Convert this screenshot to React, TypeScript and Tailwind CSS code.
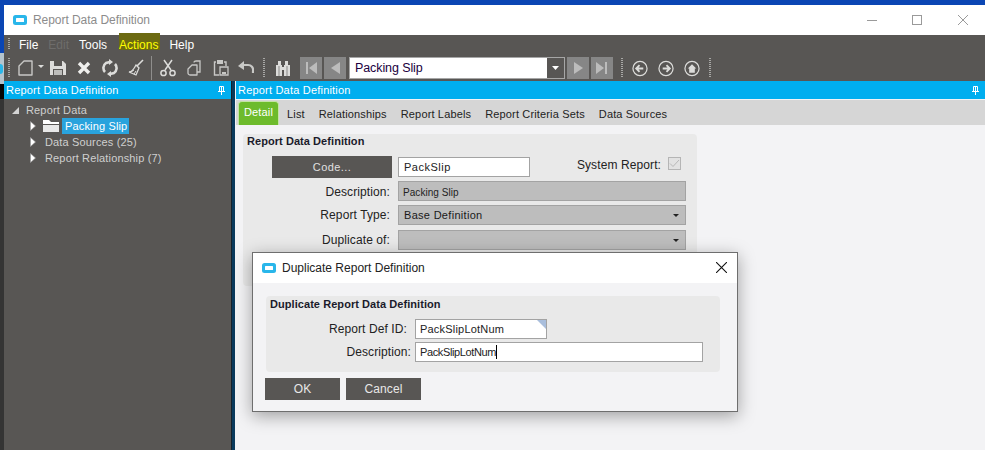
const font = "font-['Liberation_Sans',Arial,sans-serif]";

function AppIcon() {
  return (
    <svg width="14" height="10" viewBox="0 0 14 10" className="shrink-0">
      <rect x="0" y="0" width="14" height="10" rx="2.5" fill="#29b6ea" />
      <rect x="3" y="3" width="8" height="4" rx="0.5" fill="#fff" />
    </svg>
  );
}

function Grip() {
  return (
    <div className="w-[2px] h-[20px] shrink-0 bg-[repeating-linear-gradient(to_bottom,#a8a8a6_0,#a8a8a6_1px,transparent_1px,transparent_2px)]" />
  );
}

function Ico({ x, w = 16, children }: { x: string; w?: number; children: React.ReactNode }) {
  return (
    <svg width={w} height="18" viewBox={`0 0 ${w} 18`} className={`shrink-0 ${x}`} fill="none">
      {children}
    </svg>
  );
}

const C = "#dcdcda";
const D = "#c8c8c6";

function CloseGlyph({ color, size = 10 }: { color: string; size?: number }) {
  return (
    <svg width={size} height={size} viewBox="0 0 10 10" className="shrink-0">
      <path d="M0 0L10 10M10 0L0 10" stroke={color} strokeWidth="1" />
    </svg>
  );
}

function PinGlyph() {
  return (
    <svg width="7" height="9" viewBox="0 0 7 9" className="shrink-0">
      <path d="M1.5 0.5h4v5h-4z" stroke="#fff" fill="none" />
      <path d="M3 1h1v4H3z" fill="#fff" />
      <path d="M0 5h7v1H0zM3 6h1v3H3z" fill="#fff" />
    </svg>
  );
}

function Toolbar() {
  return (
    <div className="h-[28px] flex items-center pl-[4px] pt-[2px]">
      <Grip />
      <Ico x="ml-[8px]" w={15}>
        <path d="M6 2h8v14H1V7z" stroke={D} strokeWidth="1.4" strokeLinejoin="round" />
      </Ico>
      <svg width="6" height="3" viewBox="0 0 6 3" className="ml-[5px] mb-[4px] shrink-0">
        <path d="M0 0h6L3 3z" fill={C} />
      </svg>
      <Ico x="ml-[6px]">
        <path d="M0 2h13l3 3v11H0z" fill={C} />
        <rect x="4" y="2" width="8" height="5" fill="#585654" />
        <rect x="3" y="10" width="10" height="6" fill="#585654" />
        <rect x="4" y="11" width="8" height="5" fill="#bdbdbb" />
      </Ico>
      <Ico x="ml-[11px]" w={14}>
        <path d="M2 4l10 10M12 4L2 14" stroke="#efefed" strokeWidth="3.4" />
      </Ico>
      <Ico x="ml-[11px]">
        <path d="M3 13a6 6 0 0 1 1-9l4-1" stroke={C} strokeWidth="2.6" />
        <path d="M13 5a6 6 0 0 1-1 9l-4 1" stroke={C} strokeWidth="2.6" />
        <path d="M7 0l4 3-4 3zM9 12l-4 3 4 3z" fill={C} />
      </Ico>
      <Ico x="ml-[10px]">
        <path d="M15 1L9 7" stroke={C} strokeWidth="1.6" />
        <path d="M8 6l3 3-3 7-7-3c3 0 5-3 7-7z" stroke={C} strokeWidth="1.3" />
        <path d="M3 13l3-2M6 15l2-3" stroke={C} />
      </Ico>
      <div className="ml-[7px] w-px h-[24px] bg-[#8f8e8c] shrink-0" />
      <Ico x="ml-[8px]">
        <path d="M4 1l7 10M12 1L5 11" stroke={C} strokeWidth="1.5" />
        <circle cx="3.5" cy="14" r="2.6" stroke={C} strokeWidth="1.5" />
        <circle cx="12.5" cy="14" r="2.6" stroke={C} strokeWidth="1.5" />
      </Ico>
      <Ico x="ml-[11px]" w={14}>
        <path d="M7 3.5C7 2.500 8 2 9 2h4v11h-3" stroke={D} strokeWidth="1.3" />
        <path d="M5 6h5v10H3a2 2 0 0 1-2-2v-4z" stroke={D} strokeWidth="1.3" strokeLinejoin="round" />
      </Ico>
      <Ico x="ml-[12px]">
        <path d="M3 3H1.500v13H6M11 3h2v4" stroke={D} strokeWidth="1.4" />
        <rect x="4" y="1" width="6" height="4" fill={D} />
        <path d="M7 8h8v8H7z" stroke={D} strokeWidth="1.3" />
        <path d="M9 13h4v2H9z" fill={D} />
      </Ico>
      <Ico x="ml-[9px]">
        <path d="M4 6h6a5 5 0 0 1 5 6v2" stroke={D} strokeWidth="2.2" />
        <path d="M0 7l6-5v9z" fill={D} />
      </Ico>
      <div className="ml-[9px]">
        <Grip />
      </div>
      <Ico x="ml-[10px]">
        <path d="M3 2h3v4H3zM10 2h3v4h-3zM1 6h6v11H1zM9 6h6v11H9zM7 8h2v3H7z" fill={C} />
        <path d="M4 7v10M12 7v10" stroke="#8a8988" />
      </Ico>
      <div className="ml-[9px] flex gap-[2px]">
        <NavBtn><path d="M6 5h2v12H6zM17 5v12l-8-6z" fill="#bcbcbc" /></NavBtn>
        <NavBtn><path d="M16 5v12l-9-6z" fill="#bcbcbc" /></NavBtn>
      </div>
      <div className="ml-[3px] w-[216px] h-[22px] flex border border-[#a6a6a6] bg-white shrink-0">
        <span className="flex-1 pl-[5px] text-[12.5px] leading-[20px] text-[#200040] tracking-[-0.1px]">Packing Slip</span>
        <span className="w-[17px] bg-[#585654] flex items-center justify-center">
          <svg width="7" height="4" viewBox="0 0 7 4">
            <path d="M0 0h7L3.5 4z" fill="#fff" />
          </svg>
        </span>
      </div>
      <div className="ml-[2px] flex gap-[2px]">
        <NavBtn><path d="M7 5v12l9-6z" fill="#bcbcbc" /></NavBtn>
        <NavBtn><path d="M5 5v12l8-6zM14 5h2v12h-2z" fill="#bcbcbc" /></NavBtn>
      </div>
      <div className="ml-[8px]">
        <Grip />
      </div>
      <div className="ml-[9px] flex gap-[10px]">
        <Circ><path d="M12 8.5H5M8 5L4.5 8.5 8 12" stroke={C} strokeWidth="2" /></Circ>
        <Circ><path d="M5 8.5h7M9 5l3.5 3.5L9 12" stroke={C} strokeWidth="2" /></Circ>
        <Circ><path d="M8.5 4L4 8.5h1.5V13h6V8.5H13z" fill={C} /></Circ>
      </div>
      <div className="ml-[9px]">
        <Grip />
      </div>
    </div>
  );
}

function NavBtn({ children }: { children: React.ReactNode }) {
  return (
    <div className="w-[22px] h-[22px] bg-[#868686] shrink-0">
      <svg width="22" height="22" viewBox="0 0 22 22">{children}</svg>
    </div>
  );
}

function Circ({ children }: { children: React.ReactNode }) {
  return (
    <svg width="16" height="17" viewBox="0 0 17 17" fill="none" className="shrink-0">
      <circle cx="8.5" cy="8.5" r="7.5" stroke={C} strokeWidth="1.3" />
      {children}
    </svg>
  );
}

function TreeArrow() {
  return (
    <svg width="6" height="10" viewBox="0 0 6 10" className="shrink-0">
      <path d="M0.5 0.5L5.5 5L0.5 9.5z" fill="#fff" stroke="#9a9a9a" strokeWidth="0.6" />
    </svg>
  );
}

function PanelHeader({ title }: { title: string }) {
  return (
    <div className="h-[18px] bg-[#00aeef] flex items-center justify-between pl-[2px] pr-[6px] text-white text-[11px] tracking-[0.2px] shrink-0">
      <span>{title}</span>
      <PinGlyph />
    </div>
  );
}

function Select({ label }: { label?: string }) {
  return (
    <div className="w-[288px] h-[20px] bg-[#bdbdbd] border border-[#a3a3a3] flex items-center justify-between pl-[5px] pr-[6px] text-[11px] text-[#1a1a1a] tracking-[0.3px] shrink-0">
      <span>{label}</span>
      <svg width="6" height="3" viewBox="0 0 6 3">
        <path d="M0 0h6L3 3z" fill="#222" />
      </svg>
    </div>
  );
}

function Label({ w, children, className = "" }: { w: string; children: React.ReactNode; className?: string }) {
  return <span className={`text-right shrink-0 text-[12px] text-[#222] tracking-[0.1px] ${w} ${className}`}>{children}</span>;
}

function Dialog() {
  return (
    <div className="absolute left-[252px] top-[252px] w-[486px] h-[160px] bg-[#f3f3f5] border border-[#6e6e6e] shadow-[0_4px_16px_rgba(0,0,0,0.35)] flex flex-col">
      <div className="h-[30px] bg-white flex items-center pl-[9px] pr-[10px] shrink-0">
        <AppIcon />
        <span className="ml-[6px] flex-1 text-[12px] text-[#222]">Duplicate Report Definition</span>
        <div className="-mt-[2px]">
          <CloseGlyph color="#111" size={11} />
        </div>
      </div>
      <div className="mt-[13px] ml-[13px] w-[454px] h-[76px] rounded-[4px] bg-[#e9e9e9] pl-[4px] pt-[1px] shrink-0">
        <div className="text-[11px] font-bold text-[#1b1b2b] tracking-[0.06px] leading-[14px]">Duplicate Report Data Definition</div>
        <div className="mt-[8px] flex items-center">
          <Label w="w-[137px]">Report Def ID:</Label>
          <div className="relative ml-[8px] w-[132px] h-[20px] bg-white border border-[#a3a3a3] pl-[4px] text-[11px] leading-[18px] text-[#222] tracking-[0.2px] shrink-0">
            PackSlipLotNum
            <div className="absolute right-0 top-0 w-0 h-0 border-t-[9px] border-l-[9px] border-t-[#a9bedc] border-l-transparent" />
          </div>
        </div>
        <div className="mt-[3px] flex items-center">
          <Label w="w-[141px]">Description:</Label>
          <div className="ml-[4px] w-[288px] h-[20px] bg-white border border-[#a3a3a3] pl-[4px] text-[11px] leading-[18px] text-[#222] tracking-[-0.37px] shrink-0 flex items-center">
            PackSlipLotNum
            <span className="w-px h-[14px] bg-black" />
          </div>
        </div>
      </div>
      <div className="mt-[6px] ml-[12px] flex gap-[6px]">
        <div className="w-[75px] h-[22px] bg-[#585654] text-[#e8e8e8] text-[12px] flex items-center justify-center tracking-[0.1px]">OK</div>
        <div className="w-[75px] h-[22px] bg-[#585654] text-[#e8e8e8] text-[12px] flex items-center justify-center tracking-[0.1px]">Cancel</div>
      </div>
    </div>
  );
}

function TreeRow({ children, className = "" }: { children: React.ReactNode; className?: string }) {
  return <div className={`h-[16px] flex items-center ${className}`}>{children}</div>;
}

export default function App() {
  const tabs = ["List", "Relationships", "Report Labels", "Report Criteria Sets", "Data Sources"];
  return (
    <div className={`relative w-[985px] h-[450px] overflow-hidden flex flex-col bg-[#0a1a33] ${font}`}>
      <div className="h-[5px] bg-[#0b46b4] shrink-0" />
      <div className="flex-1 flex min-h-0">
        <div className="w-[4px] shrink-0 flex flex-col">
          <div className="h-[48px] bg-[#0b46b4]" />
          <div className="h-[31px] bg-[#b4c4ce] flex items-center">
            <div className="w-[3px] h-[10px] rounded-r-full bg-[#29b6ea]" />
          </div>
          <div className="h-[15px] bg-[#050505]" />
          <div className="flex-1 bg-[#343434]" />
        </div>
        <div className="flex-1 flex flex-col min-w-0 bg-[#f3f3f5]">
          {/* Title bar */}
          <div className="h-[30px] bg-white flex items-center pl-[9px] shrink-0">
            <AppIcon />
            <span className="ml-[6px] flex-1 text-[12px] text-[#8c8c8c] tracking-[-0.05px]">Report Data Definition</span>
            <div className="w-[10px] h-[1px] bg-[#9a9a9a] shrink-0" />
            <div className="ml-[35px] w-[10px] h-[10px] border border-[#9a9a9a] shrink-0" />
            <div className="ml-[36px] mr-[17px]">
              <CloseGlyph color="#9a9a9a" />
            </div>
          </div>

          {/* Menu + toolbar */}
          <div className="bg-[#585654] text-white shrink-0">
            <div className="h-[18px] flex items-start pl-[4px] text-[12px] leading-[14px] relative">
              <div className="mt-[3px] w-[2px] h-[12px] bg-[repeating-linear-gradient(to_bottom,#a8a8a6_0,#a8a8a6_1px,transparent_1px,transparent_2px)]" />
              <span className="ml-[9px] pt-[3px]">File</span>
              <span className="ml-[10px] pt-[3px] text-[#6e6d6b]">Edit</span>
              <span className="ml-[10px] pt-[3px]">Tools</span>
              <span className="ml-[12px] -mt-[2px] h-[17px] pt-[5px] pr-[2px] bg-[#6c6a12] text-[#ffff00]">Actions</span>
              <span className="ml-[9px] pt-[3px]">Help</span>
            </div>
            <Toolbar />
          </div>

          <div className="flex-1 flex min-h-0">
            {/* Tree panel */}
            <div className="w-[227px] shrink-0 flex flex-col bg-[#585654]">
              <PanelHeader title="Report Data Definition" />
              <div className="pt-[3px] text-[11px] text-[#cfcfcf] tracking-[0.15px]">
                <TreeRow className="pl-[8px]">
                  <svg width="7" height="7" viewBox="0 0 7 7">
                    <path d="M7 0v7H0z" fill="#d4d4d4" />
                  </svg>
                  <span className="ml-[7px]">Report Data</span>
                </TreeRow>
                <TreeRow className="pl-[26px]">
                  <TreeArrow />
                  <svg width="16" height="12" viewBox="0 0 16 12" className="ml-[7px] shrink-0">
                    <path d="M0 0h6l2 2h8v2H0z" fill="#fff" />
                    <rect x="0" y="5" width="16" height="7" fill="#e8e8e8" />
                  </svg>
                  <span className="ml-[3px] h-[16px] leading-[16px] pl-[3px] pr-[2px] bg-[#29a3dd] text-white">Packing Slip</span>
                </TreeRow>
                <TreeRow className="pl-[26px]">
                  <TreeArrow />
                  <span className="ml-[9px]">Data Sources (25)</span>
                </TreeRow>
                <TreeRow className="pl-[26px]">
                  <TreeArrow />
                  <span className="ml-[9px]">Report Relationship (7)</span>
                </TreeRow>
              </div>
            </div>

            {/* Divider */}
            <div className="w-[4px] shrink-0 bg-[#0a3a5c] border-l border-[#16222c]" />
            <div className="w-px shrink-0 bg-[#f3f3f5]" />

            {/* Detail panel */}
            <div className="flex-1 flex flex-col min-w-0">
              <PanelHeader title="Report Data Definition" />
              <div className="h-px bg-[#f3f3f5] shrink-0" />
              <div className="h-[25px] bg-[#d6d6d6] flex items-end pl-[2px] text-[11px] text-[#222] tracking-[0.15px] shrink-0">
                <div className="h-[24px] px-[5px] rounded-t-[4px] bg-[#6dbb2c] border border-b-0 border-[#c4e4a6] text-white text-[11px] leading-[21px]">Detail</div>
                <div className="flex gap-[14px] ml-[8px] h-[25px] items-center pt-[4px]">
                  {tabs.map((t) => (
                    <span key={t}>{t}</span>
                  ))}
                </div>
              </div>

              <div className="mt-[9px] ml-[7px] w-[454px] h-[152px] rounded-[4px] bg-[#e9e9e9] pl-[4px] shrink-0">
                <div className="text-[11px] font-bold text-[#1b1b2b] tracking-[0.06px] leading-[14px]">Report Data Definition</div>
                <div className="mt-[8px] flex">
                  <div className="ml-[25px] w-[120px] h-[22px] bg-[#585654] text-[#e0e0e0] text-[11px] flex items-center justify-center tracking-[0.4px] shrink-0">Code...</div>
                  <div className="ml-[6px] mt-[1px] w-[132px] h-[20px] bg-white border border-[#a3a3a3] pl-[5px] text-[11px] leading-[18px] text-[#222] tracking-[0.5px] shrink-0">PackSlip</div>
                  <Label w="w-[131px]" className="leading-[18px]">System Report:</Label>
                  <div className="ml-[7px] mt-[1px] w-[13px] h-[13px] bg-[#e2e2e2] border border-[#b5b5b5] flex items-center justify-center shrink-0">
                    <svg width="11" height="9" viewBox="0 0 11 9" fill="none">
                      <path d="M1 4.5L4 7.5L10 1" stroke="#b8b8b8" strokeWidth="1" />
                    </svg>
                  </div>
                </div>
                <div className="mt-[3px] flex items-center">
                  <Label w="w-[143px]" className="pt-[1px]">Description:</Label>
                  <div className="ml-[8px] w-[288px] h-[20px] bg-[#bdbdbd] border border-[#a3a3a3] pl-[4px] text-[10px] leading-[21px] text-[#222] tracking-[0.05px] shrink-0">Packing Slip</div>
                </div>
                <div className="mt-[4px] flex items-center">
                  <Label w="w-[143px]">Report Type:</Label>
                  <div className="ml-[8px]"><Select label="Base Definition" /></div>
                </div>
                <div className="mt-[5px] flex items-center">
                  <Label w="w-[143px]">Duplicate of:</Label>
                  <div className="ml-[8px]"><Select /></div>
                </div>
              </div>
            </div>
          </div>
        </div>
      </div>
      <Dialog />
    </div>
  );
}
